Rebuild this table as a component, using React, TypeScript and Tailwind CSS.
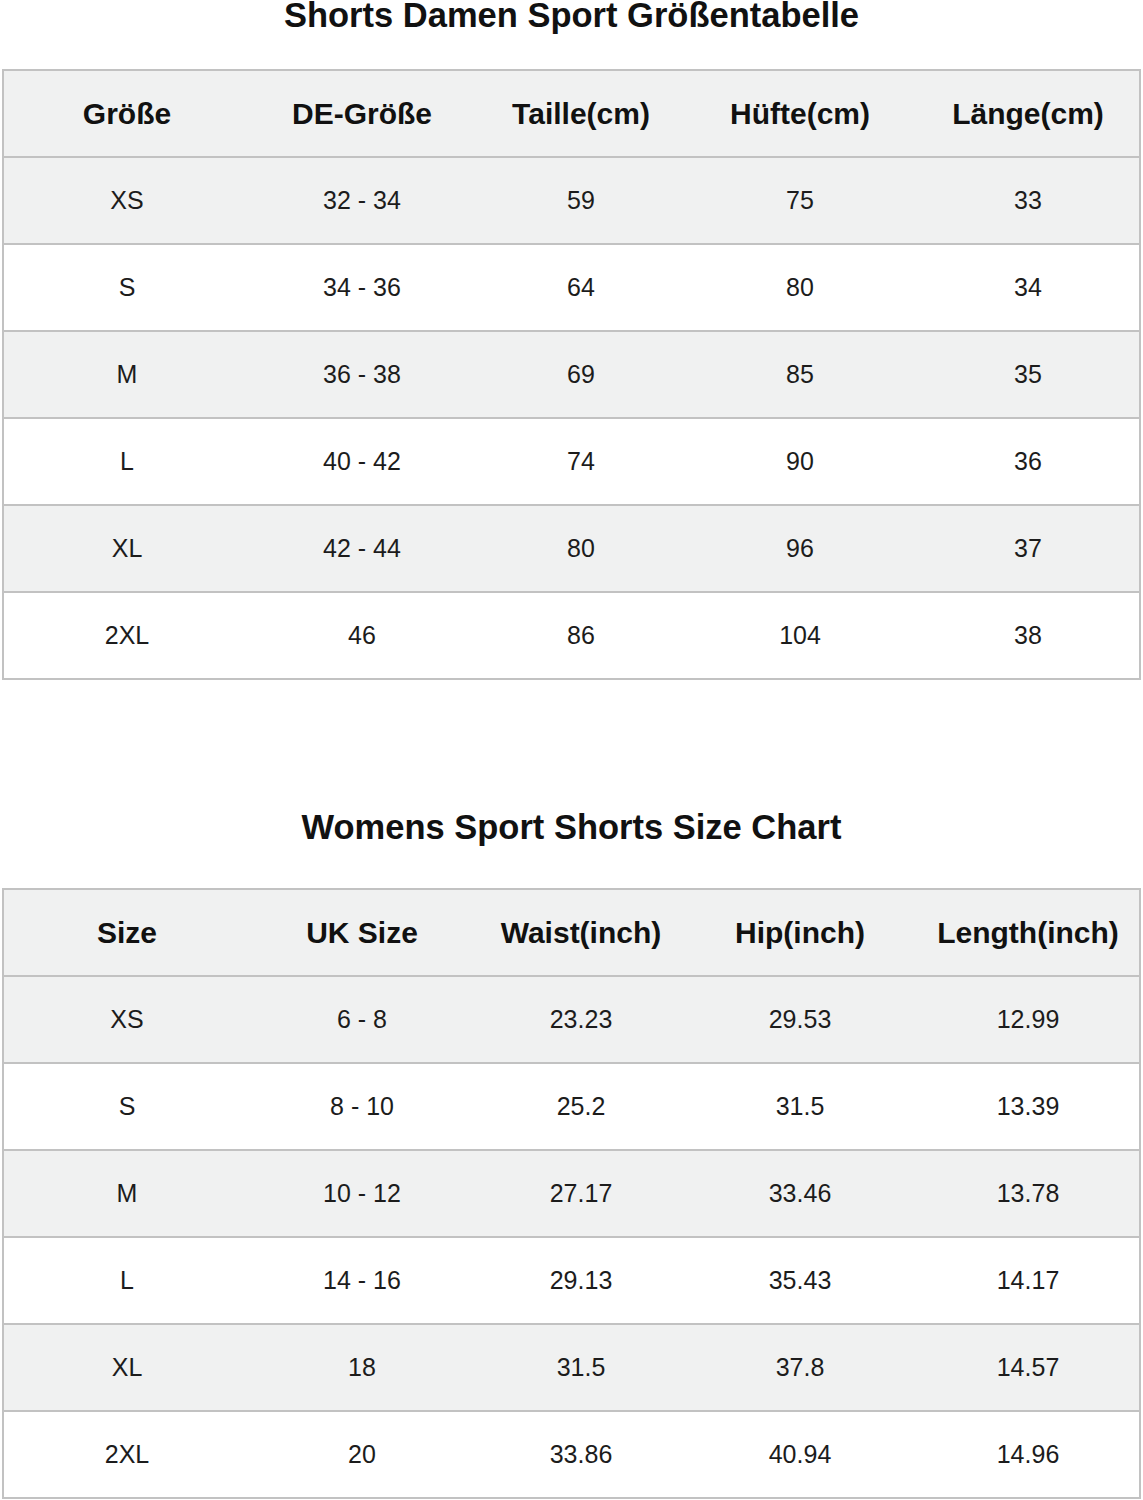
const FONT = { fontFamily: '"Liberation Sans", Arial, sans-serif' };

type Table = {
  title: string;
  head: string[];
  rows: string[][];
};

const TABLES: Table[] = [
  {
    title: 'Shorts Damen Sport Größentabelle',
    head: ['Größe', 'DE-Größe', 'Taille(cm)', 'Hüfte(cm)', 'Länge(cm)'],
    rows: [
      ['XS', '32 - 34', '59', '75', '33'],
      ['S', '34 - 36', '64', '80', '34'],
      ['M', '36 - 38', '69', '85', '35'],
      ['L', '40 - 42', '74', '90', '36'],
      ['XL', '42 - 44', '80', '96', '37'],
      ['2XL', '46', '86', '104', '38'],
    ],
  },
  {
    title: 'Womens Sport Shorts Size Chart',
    head: ['Size', 'UK Size', 'Waist(inch)', 'Hip(inch)', 'Length(inch)'],
    rows: [
      ['XS', '6 - 8', '23.23', '29.53', '12.99'],
      ['S', '8 - 10', '25.2', '31.5', '13.39'],
      ['M', '10 - 12', '27.17', '33.46', '13.78'],
      ['L', '14 - 16', '29.13', '35.43', '14.17'],
      ['XL', '18', '31.5', '37.8', '14.57'],
      ['2XL', '20', '33.86', '40.94', '14.96'],
    ],
  },
];

const GRID = 'grid grid-cols-[246px_224px_214px_224px_1fr]';

function SizeTable({ table }: { table: Table }) {
  return (
    <div className="mx-[2px] border-2 border-[#c2c2c2]">
      {/* header */}
      <div className={`${GRID} h-[87px] items-center border-b-2 border-[#c2c2c2] bg-[#f0f1f1]`}>
        {table.head.map((h, j) => (
          <div key={h} className={`text-center text-[30px] font-bold text-[#111] ${j === 4 ? 'pl-[5px]' : ''}`}>
            {h}
          </div>
        ))}
      </div>
      {table.rows.map((row, i) => (
        <div
          key={row[0]}
          className={`${GRID} items-center ${
            i < table.rows.length - 1 ? 'h-[87px] border-b-2 border-[#c2c2c2]' : 'h-[85px]'
          } ${i % 2 === 0 ? 'bg-[#f0f1f1]' : 'bg-white'}`}
        >
          {row.map((c, j) => (
            <div key={j} className={`text-center text-[25px] text-[#1c1c1c] ${j === 4 ? 'pl-[5px]' : ''}`}>
              {c}
            </div>
          ))}
        </div>
      ))}
    </div>
  );
}

export default function App() {
  return (
    <div className="w-[1143px] min-h-[1500px] bg-white" style={FONT}>
      <h1 className="text-center text-[34.5px] font-bold leading-[30px] text-[#111] mb-[39px]">
        {TABLES[0].title}
      </h1>
      <SizeTable table={TABLES[0]} />
      <h1 className="mt-[132px] text-center text-[34.5px] font-bold leading-[30px] text-[#111] mb-[46px]">
        {TABLES[1].title}
      </h1>
      <SizeTable table={TABLES[1]} />
    </div>
  );
}
